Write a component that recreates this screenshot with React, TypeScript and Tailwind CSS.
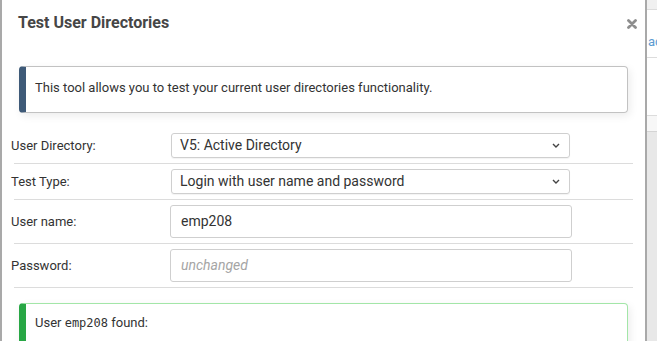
const Chevron = () => (
  <svg width="8" height="5" viewBox="0 0 8 5" className="shrink-0">
    <path d="M1 1l3 3 3-3" fill="none" stroke="#444" strokeWidth="1.4" />
  </svg>
);

const Divider = () => <div className="ml-[12px] h-px w-[619px] bg-[#dcdcdc]" />;

const App = () => {
  return (
    <div className="flex h-[341px] w-[657px] overflow-hidden bg-white font-['Roboto',sans-serif]">
      <div className="w-[647px] shrink-0 border-x-2 border-[#a9a9a9] bg-white">
        {/* header */}
        <div className="flex h-[42px] items-center justify-between pt-[4px] pl-4 pr-[8px]">
          <h1 className="text-[16px] font-bold text-[#464646]">Test User Directories</h1>
          <svg width="10" height="10" viewBox="0 0 10 10" className="mt-[1px]">
            <path d="M1.5 1.5l7 7M8.5 1.5l-7 7" stroke="#8e8e8e" strokeWidth="2.8" strokeLinecap="round" />
          </svg>
        </div>

        <div className="mx-[17px] mt-[24px] rounded-[4px] border border-l-[7px] border-[#c2c2c2] border-l-[#3e5a78] pt-[12px] pb-[15px] pl-[9px] text-[13px] leading-[18px] text-[#333] shadow-[2px_3px_8px_rgba(0,0,0,0.08)]">
          This tool allows you to test your current user directories functionality.
        </div>

        <div className="mt-[15px]">
          <div className="flex items-center py-[5px] pl-[9px]">
            <label className="w-[160px] text-[13px] text-[#333]">User Directory:</label>
            <div className="flex h-[25px] w-[399px] items-center justify-between rounded-[3px] border border-[#cfcfcf] pl-[8px] pr-[9px] text-[14px] text-[#333] shadow-[0_1px_1px_rgba(0,0,0,0.05)]">
              <span>V5: Active Directory</span>
              <Chevron />
            </div>
          </div>
          <Divider />
          <div className="flex items-center py-[5px] pl-[9px]">
            <label className="w-[160px] text-[13px] text-[#333]">Test Type:</label>
            <div className="flex h-[25px] w-[399px] items-center justify-between rounded-[3px] border border-[#cfcfcf] pl-[8px] pr-[9px] text-[14px] text-[#333] shadow-[0_1px_1px_rgba(0,0,0,0.05)]">
              <span>Login with user name and password</span>
              <Chevron />
            </div>
          </div>
          <Divider />
          <div className="flex items-center py-[5px] pl-[9px]">
            <label className="w-[159px] text-[13px] text-[#333]">User name:</label>
            <div className="flex h-[33px] w-[402px] items-center rounded-[3px] border border-[#cfcfcf] pl-[10px] text-[14px] text-[#333]">
              emp208
            </div>
          </div>
          <Divider />
          <div className="flex items-center py-[5px] pl-[9px]">
            <label className="w-[159px] text-[13px] text-[#333]">Password:</label>
            <div className="flex h-[33px] w-[402px] items-center rounded-[3px] border border-[#cfcfcf] pl-[10px] text-[14px] italic text-[#a5a5a5]">
              unchanged
            </div>
          </div>
          <Divider />
        </div>

        <div className="mx-[17px] mt-[15px] h-[60px] rounded-[4px] border border-l-[7px] border-[#a3e6a8] border-l-[#28a745] pt-[10px] pl-[9px] text-[13px] leading-[18px] text-[#333] shadow-[2px_3px_8px_rgba(0,0,0,0.08)]">
          User <span className="font-['DejaVu_Sans_Mono',monospace] text-[12px]">emp208</span> found:
        </div>
      </div>

      {/* background page strip */}
      <div className="flex flex-1 flex-col overflow-hidden">
        <div className="h-[10px] border-b border-[#dcdcdc] bg-[#f0f0f0]" />
        <div className="h-[48px] border-b border-[#dcdcdc] bg-white pt-[24px] pl-[1px] text-[13px] leading-[16px] text-[#5b9bd1]">
          ac
        </div>
        <div className="h-[58px] border-b border-[#dcdcdc] bg-white" />
        <div className="h-[16px] border-b border-[#d4d4d4] bg-[#f7f7f7]" />
        <div className="flex-1 bg-[#e8e8e8]" />
      </div>
    </div>
  );
};

export default App;
